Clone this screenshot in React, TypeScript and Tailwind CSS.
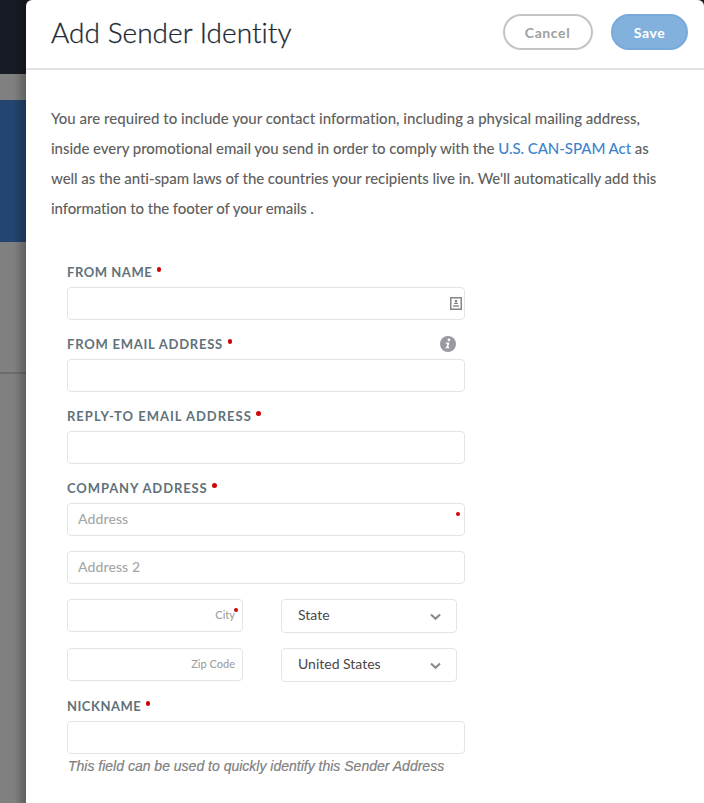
import type { ReactNode } from "react";

function Dot({ className = "" }: { className?: string }) {
  return <span className={`block size-[4.5px] rounded-full bg-[#cc0505] ${className}`} />;
}

function Label({ children, tracking = "tracking-[0.77px]", info = false }: { children: ReactNode; tracking?: string; info?: boolean }) {
  return (
    <div className="flex h-[39px] items-start pt-[15px]">
      <span className={`text-[13px] leading-[19px] font-bold text-[#5f727b] ${tracking}`}>{children}</span>
      <Dot className="mt-[4px] ml-[4.5px]" />
      {info && (
        <svg className="mt-px mr-[9px] ml-auto" width="16" height="16" viewBox="0 0 16 16">
          <circle cx="8" cy="8" r="8" fill="#9999a3" />
          <circle cx="8.9" cy="3.9" r="1.35" fill="#fff" />
          <path d="M6 6.4h3.4L8.3 11h1.1l-.3 1.3H5.5l.3-1.2h.7l.8-3.4H5.7z" fill="#fff" />
        </svg>
      )}
    </div>
  );
}

function Field({ children, className = "" }: { children?: ReactNode; className?: string }) {
  return <div className={`flex h-[33px] items-center rounded-[4px] border border-[#e4e4e4] bg-white ${className}`}>{children}</div>;
}

function Select({ children }: { children: ReactNode }) {
  return (
    <div className="flex h-[34px] w-[176px] items-center justify-between rounded-[4px] border border-[#e4e4e4] pr-[15px] pl-4 text-[14px] text-[#494547]">
      <span className="-mt-[3px]">{children}</span>
      <svg className="mt-[2px]" width="11" height="8" viewBox="0 0 11 8" fill="none" stroke="#8b8b8b" strokeWidth="2.2">
        <path d="M1 1.5 5.5 5.8 10 1.5" />
      </svg>
    </div>
  );
}

export default function App() {
  return (
    <div className="flex h-[803px] w-[704px] overflow-hidden bg-[#171c24] font-['Lato',sans-serif] [font-variant-ligatures:none]">
      <div className="relative w-[26px] shrink-0">
        <div className="h-[74px] bg-[#171c24]" />
        <div className="h-[26px] bg-[#808080]" />
        <div className="h-[142px] bg-[#23456f]" />
        <div className="h-[130px] bg-[#808080]" />
        <div className="h-[2px] bg-[#6d6d6d]" />
        <div className="h-[429px] bg-[#808080]" />
        <div className="absolute inset-y-0 right-0 w-3 bg-linear-to-r from-transparent to-black/25" />
      </div>
      <main className="w-[678px] rounded-t-[6px] bg-white">
        <header className="flex h-[70px] items-start border-b-2 border-[#e3e3e3] pl-[25px]">
          <h1 className="mt-[13px] w-[452px] text-[28px] leading-[38px] font-light tracking-[0.04px] whitespace-nowrap text-[#202833] [-webkit-text-stroke:0.3px_#202833]">Add Sender Identity</h1>
          <button className="mt-[14px] h-9 w-[90px] rounded-full border-2 border-[#c4c4c4] pt-px pr-px text-[14px] font-bold tracking-[0.6px] text-[#a0a0a0]">Cancel</button>
          <button className="mt-[14px] ml-[18px] h-9 w-[77px] rounded-full border-2 border-[#77a9d9] bg-[#82b1dd] pt-px text-[14px] font-bold tracking-[0.6px] text-white">Save</button>
        </header>
        <p className="mt-[33px] pl-[25px] text-[15px] leading-[30px] font-medium whitespace-nowrap text-[#606060]">
          <span className="block tracking-[0.02px]">You are required to include your contact information, including a physical mailing address,</span>
          <span className="block tracking-[-0.045px]">inside every promotional email you send in order to comply with the <a className="text-[#3d84cb]">U.S. CAN-SPAM Act</a> as</span>
          <span className="block tracking-[-0.06px]">well as the anti-spam laws of the countries your recipients live in. We'll automatically add this</span>
          <span className="block tracking-[-0.11px]">information to the footer of your emails .</span>
        </p>
        <form className="mt-[25px] ml-[41px] w-[398px]">
          <Label tracking="tracking-[0.55px]">FROM NAME</Label>
          <Field className="justify-end pr-[2px]">
            <svg width="12" height="13" viewBox="0 0 12 13">
              <rect x=".75" y=".75" width="10.5" height="11.5" fill="#fff" stroke="#858585" strokeWidth="1.5" />
              <circle cx="6" cy="4.1" r="1.3" fill="#858585" />
              <path d="M4 7V6h1l1-.7 1 .7h1v1z" fill="#858585" />
              <path d="M3 8h6v2H3z" fill="#aaa" />
            </svg>
          </Field>
          <Label info>FROM EMAIL ADDRESS</Label>
          <Field />
          <Label tracking="tracking-[1px]">REPLY-TO EMAIL ADDRESS</Label>
          <Field />
          <Label tracking="tracking-[0.9px]">COMPANY ADDRESS</Label>
          <Field className="justify-between pr-1 pl-[10px] text-[14px] text-[#a6a6a6]">
            <span className="-mt-[2px] font-medium tracking-[0.1px]">Address</span>
            <Dot className="-mt-[11px]" />
          </Field>
          <Field className="mt-[15px] pl-[10px] text-[14px] text-[#a6a6a6]"><span className="-mt-[2px] font-medium tracking-[0.1px]">Address 2</span></Field>
          <div className="mt-[15px] flex h-[34px] gap-[38px]">
            <Field className="w-[176px] justify-end pr-1 text-[11px] text-[#a0a0a0]">
              <span className="font-medium">City</span>
              <Dot className="-mt-[11px] -ml-[1.5px]" />
            </Field>
            <Select>State</Select>
          </div>
          <div className="mt-[15px] flex h-[34px] gap-[38px]">
            <Field className="w-[176px] justify-end pr-[7px] text-[11px] text-[#a0a0a0]"><span className="font-medium">Zip Code</span></Field>
            <Select>United States</Select>
          </div>
          <Label tracking="tracking-[0.5px]">NICKNAME</Label>
          <Field />
          <p className="mt-[2px] pl-px font-['Liberation_Sans',sans-serif] text-[14px] leading-5 whitespace-nowrap text-[#808080] italic [-webkit-text-stroke:0.2px_#808080]">This field can be used to quickly identify this Sender Address</p>
        </form>
      </main>
    </div>
  );
}
